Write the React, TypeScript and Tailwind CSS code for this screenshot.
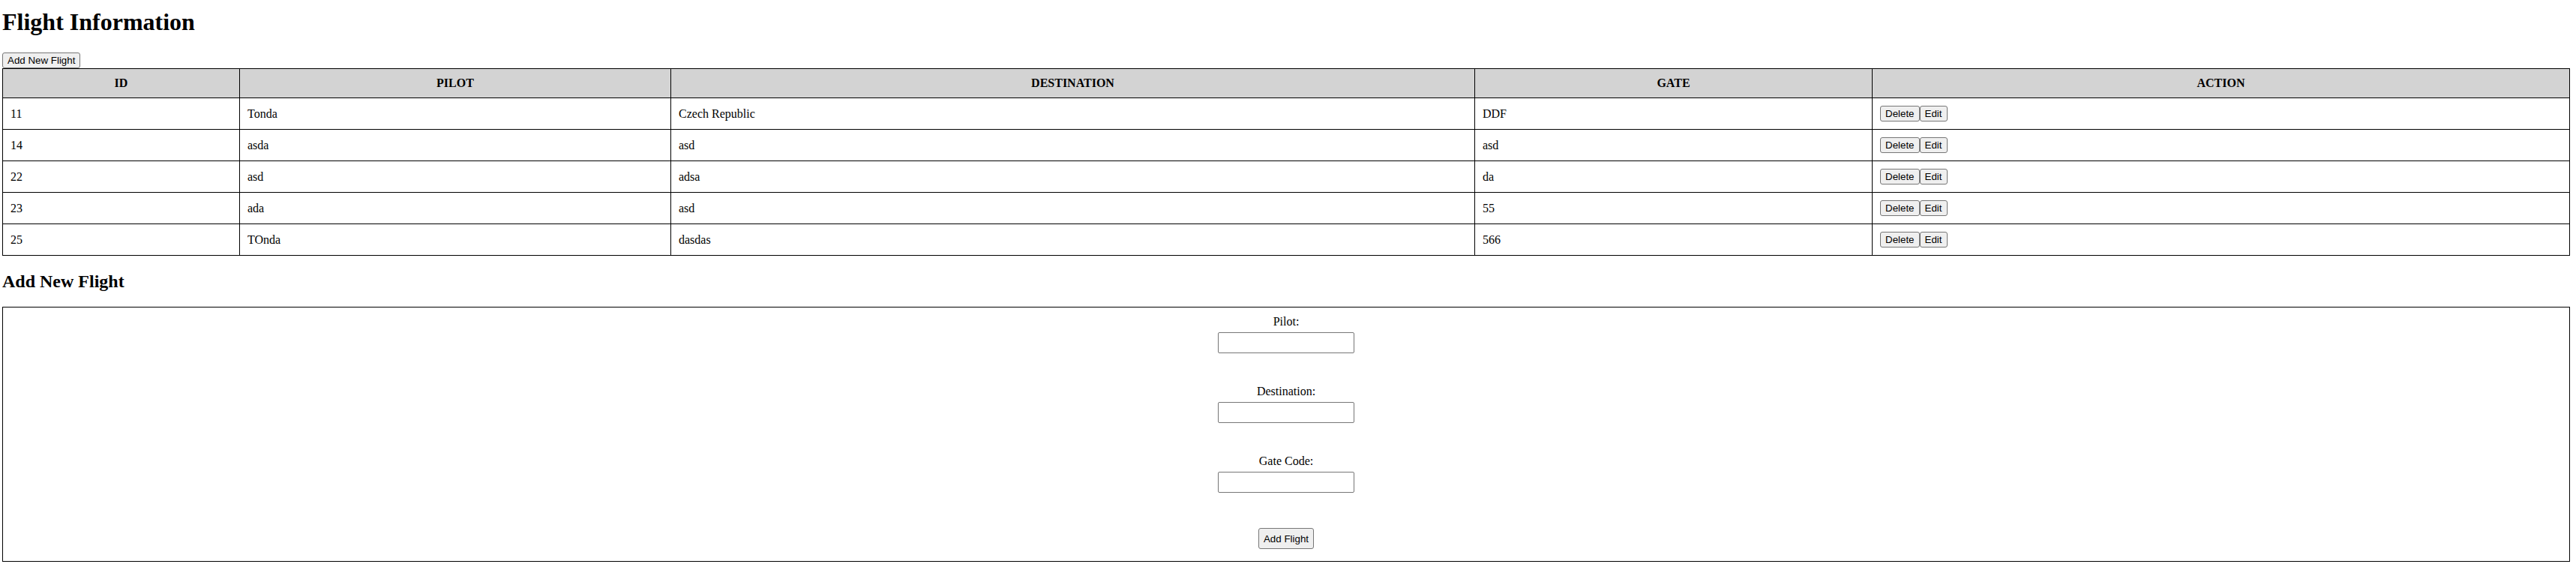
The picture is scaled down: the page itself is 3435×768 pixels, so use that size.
const flights = [
  { id: 11, pilot: "Tonda", destination: "Czech Republic", gate: "DDF" },
  { id: 14, pilot: "asda", destination: "asd", gate: "asd" },
  { id: 22, pilot: "asd", destination: "adsa", gate: "da" },
  { id: 23, pilot: "ada", destination: "asd", gate: "55" },
  { id: 25, pilot: "TOnda", destination: "dasdas", gate: "566" },
];

const btn =
  "bg-[#efefef] border border-[#767676] rounded-[3px] px-[6px] py-[2px] text-[13.333px] leading-[15px] font-['Liberation_Sans',Arial,sans-serif] text-black";

const cell = "border border-black px-[10px] py-[10px] align-middle text-left leading-[18px]";
const head = "border border-black px-[10px] py-[10px] align-middle text-center leading-[18px] font-bold uppercase bg-[#d3d3d3]";

function Field({ label, first }: { label: string; first?: boolean }) {
  return (
    <div className={first ? "flex flex-col items-center" : "mt-[42px] flex flex-col items-center"}>
      <label className="text-[16px] leading-[18px]">{label}</label>
      <input
        type="text"
        className="mt-[5px] h-[28px] w-[182px] rounded-[2px] border border-[#767676] bg-white px-[4px] text-[13.333px] font-['Liberation_Sans',Arial,sans-serif]"
      />
    </div>
  );
}

export default function App() {
  return (
    <div className="min-h-[768px] bg-white pl-[3px] pr-[8px] pt-[11px] font-['Liberation_Serif','Times_New_Roman',serif] text-[16px] text-black">
      <h1 className="mb-[22px] text-[32px] font-bold leading-[37px]">Flight Information</h1>

      <button className={`${btn} block`}>Add New Flight</button>

      <table className="w-full table-fixed border-collapse">
        <thead>
          <tr>
            <th className={`${head} w-[316px]`}>ID</th>
            <th className={`${head} w-[575px]`}>Pilot</th>
            <th className={`${head} w-[1072px]`}>Destination</th>
            <th className={`${head} w-[530px]`}>Gate</th>
            <th className={head}>Action</th>
          </tr>
        </thead>
        <tbody>
          {flights.map((f) => (
            <tr key={f.id}>
              <td className={cell}>{f.id}</td>
              <td className={cell}>{f.pilot}</td>
              <td className={cell}>{f.destination}</td>
              <td className={cell}>{f.gate}</td>
              <td className={cell}>
                <div className="flex">
                  <button className={btn}>Delete</button>
                  <button className={btn}>Edit</button>
                </div>
              </td>
            </tr>
          ))}
        </tbody>
      </table>

      <h2 className="mt-[20px] mb-[20px] text-[24px] font-bold leading-[28px]">Add New Flight</h2>

      <div className="flex flex-col items-center border border-black pt-[10px] pb-[16px]">
        <Field label="Pilot:" first />
        <Field label="Destination:" />
        <Field label="Gate Code:" />
        <button className={`${btn} mt-[47px] h-[28px] py-[5px]`}>Add Flight</button>
      </div>
    </div>
  );
}
